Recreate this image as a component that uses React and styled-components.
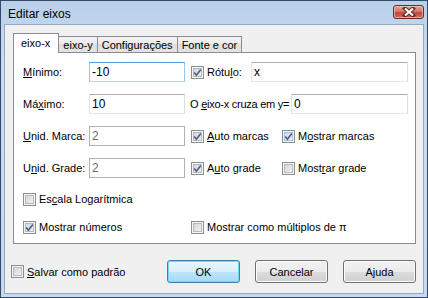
import styled, { createGlobalStyle } from "styled-components";

const GlobalStyle = createGlobalStyle`
  html, body { margin: 0; padding: 0; background: #fff; }
  body {
    font-family: "Liberation Sans", Arial, sans-serif;
    font-size: 11px;
    color: #000;
  }
`;

const Window = styled.div`
  width: 428px;
  height: 298px;
  box-sizing: border-box;
  border: 1px solid #34486a;
  background: linear-gradient(#b9d0ea, #cadcf1 60px, #c8daf0);
  padding: 0 3px 3px 3px;
  display: flex;
  flex-direction: column;
`;

const TitleBar = styled.div`
  height: 23px;
  flex: none;
  display: flex;
  justify-content: space-between;
  align-items: flex-start;
`;

const Title = styled.div`
  font-size: 12px;
  line-height: 16px;
  margin: 5px 0 0 4px;
`;

const CloseButton = styled.div`
  width: 31px;
  height: 14px;
  margin: 4px 0 0 0;
  box-sizing: border-box;
  border: 1px solid #6b2a23;
  border-radius: 3px;
  background: linear-gradient(#e3a597, #d17a6b 45%, #c1473a 55%, #cf6e5c);
  box-shadow: inset 0 0 0 1px rgba(255, 220, 210, 0.55);
  display: flex;
  align-items: center;
  justify-content: center;
`;

const Client = styled.div`
  flex: 1;
  border: 1px solid #93a8c4;
  background: #f0f0f0;
  padding: 8px 7px 0 8px;
  display: flex;
  flex-direction: column;
`;

const TabStrip = styled.div`
  display: flex;
  align-items: flex-end;
  height: 19px;
`;

const Tab = styled.div`
  position: relative;
  box-sizing: border-box;
  border: 1px solid #898c95;
  border-bottom: none;
  white-space: nowrap;
  display: flex;
  align-items: center;
  ${p => p.$active ? `
    height: 20px;
    margin-bottom: -1px;
    padding: 0 8px 2px 7px;
    background: #fff;
    z-index: 1;
  ` : `
    height: 16px;
    padding: 1px 4px 0 4px;
    border-left: none;
    background: linear-gradient(#f3f3f3, #ebebeb 50%, #dedede 50%, #e3e3e3);
  `}
`;

const Panel = styled.div`
  border: 1px solid #898c95;
  background: #fff;
  padding: 9px 0 6px 9px;
  display: flex;
  flex-direction: column;
`;

const FieldRow = styled.div`
  display: flex;
  align-items: center;
  height: 20px;
  margin-top: ${p => p.$gap || 0}px;
`;

const LeftCell = styled.div`
  width: 168px;
  flex: none;
  display: flex;
  align-items: center;
`;

const RightCell = styled.div`
  width: 217px;
  flex: none;
  display: flex;
  align-items: center;
`;

const Label = styled.span`
  width: 66px;
  flex: none;
  white-space: nowrap;
`;

const Prompt = styled.span`
  flex: 1;
  white-space: nowrap;
  letter-spacing: -0.25px;
  margin-left: -1px;
`;

const TextBox = styled.div`
  width: ${p => p.$w}px;
  height: 20px;
  box-sizing: border-box;
  flex: none;
  border: 1px solid;
  border-color: ${p => p.$focus
    ? "#569de5 #99c4ee #b7d5f2 #99c4ee"
    : p.$disabled
      ? "#adb2b5"
      : "#abadb3 #dbdfe6 #e3e9ef #e2e3ea"};
  background: #fff;
  color: ${p => (p.$disabled ? "#6d6d6d" : "#000")};
  font-size: 12px;
  line-height: 18px;
  padding-left: 2px;
  white-space: nowrap;
`;

const Check = styled.label`
  display: flex;
  align-items: center;
  white-space: nowrap;
  width: ${p => (p.$w ? `${p.$w}px` : "auto")};
  flex: none;
`;

const Box = styled.span`
  width: 13px;
  height: 13px;
  box-sizing: border-box;
  flex: none;
  margin-right: 3px;
  border: 1px solid ${p => (p.$hot ? "#7a8fa8" : "#8e8f8f")};
  background: ${p => p.$hot
    ? "linear-gradient(135deg, #c7d6e6, #f4f7fa)"
    : "linear-gradient(135deg, #ccd0d5, #f7f7f7)"};
  box-shadow: inset 0 0 0 1px #f4f4f4, inset 0 0 0 2px ${p => (p.$hot ? "#aebfd2" : "#b7bbc0")};
  display: flex;
  align-items: center;
  justify-content: center;
`;

const Key = styled.u`
  text-decoration-thickness: 1px;
  text-underline-offset: 1px;
`;

const Footer = styled.div`
  margin-top: 16px;
  margin-left: -2px;
  display: flex;
  align-items: center;
  gap: 15px;
`;

const Spacer = styled.div`
  flex: 1;
`;

const Button = styled.button`
  width: 73px;
  height: 23px;
  box-sizing: border-box;
  padding: 0;
  font: 11px "Liberation Sans", Arial, sans-serif;
  color: #000;
  border: 1px solid ${p => (p.$default ? "#3c7fb1" : "#707070")};
  border-radius: 3px;
  background: ${p => p.$default
    ? "linear-gradient(#eaf6fd, #d9f0fc 50%, #bee6fd 50%, #a7d9f5)"
    : "linear-gradient(#f2f2f2, #ebebeb 50%, #dddddd 50%, #cfcfcf)"};
  box-shadow: inset 0 0 0 1px ${p => (p.$default ? "#72d8fb" : "#fcfcfc")};
`;

const CheckBox = ({ checked, hot, w, children }) => (
  <Check $w={w}>
    <Box $hot={hot}>
      {checked && (
        <svg width="9" height="9" viewBox="0 0 9 9">
          <path d="M1.2 4.6 L3.4 7.2 L7.8 1.4" fill="none" stroke="#4a5d8a" strokeWidth="1.6" />
        </svg>
      )}
    </Box>
    <span>{children}</span>
  </Check>
);

export default function App() {
  return (
    <>
      <GlobalStyle />
      <Window>
        <TitleBar>
          <Title>Editar eixos</Title>
          <CloseButton>
            <svg width="14" height="10" viewBox="0 0 14 10">
              <path d="M3 1.5 L11 8.5 M11 1.5 L3 8.5" stroke="#5a2a26" strokeWidth="4" strokeLinecap="square" />
              <path d="M3 1.5 L11 8.5 M11 1.5 L3 8.5" stroke="#fff" strokeWidth="2.2" />
            </svg>
          </CloseButton>
        </TitleBar>
        <Client>
          <TabStrip>
            <Tab $active>eixo-x</Tab>
            <Tab>eixo-y</Tab>
            <Tab>Configurações</Tab>
            <Tab>Fonte e cor</Tab>
          </TabStrip>
          <Panel>
            <FieldRow>
              <LeftCell>
                <Label><Key>M</Key>ínimo:</Label>
                <TextBox $w={96} $focus>-10</TextBox>
              </LeftCell>
              <RightCell>
                <CheckBox w={60} checked>Rótu<Key>l</Key>o:</CheckBox>
                <TextBox $w={157}>x</TextBox>
              </RightCell>
            </FieldRow>
            <FieldRow $gap={12}>
              <LeftCell>
                <Label>Má<Key>x</Key>imo:</Label>
                <TextBox $w={96}>10</TextBox>
              </LeftCell>
              <RightCell>
                <Prompt>O <Key>e</Key>ixo-x cruza em y=</Prompt>
                <TextBox $w={117}>0</TextBox>
              </RightCell>
            </FieldRow>
            <FieldRow $gap={12}>
              <LeftCell>
                <Label><Key>U</Key>nid. Marca:</Label>
                <TextBox $w={96} $disabled>2</TextBox>
              </LeftCell>
              <RightCell>
                <CheckBox w={91} checked><Key>A</Key>uto marcas</CheckBox>
                <CheckBox checked hot>M<Key>o</Key>strar marcas</CheckBox>
              </RightCell>
            </FieldRow>
            <FieldRow $gap={12}>
              <LeftCell>
                <Label>U<Key>n</Key>id. Grade:</Label>
                <TextBox $w={96} $disabled>2</TextBox>
              </LeftCell>
              <RightCell>
                <CheckBox w={91} checked>A<Key>u</Key>to grade</CheckBox>
                <CheckBox>Most<Key>r</Key>ar grade</CheckBox>
              </RightCell>
            </FieldRow>
            <FieldRow $gap={11}>
              <CheckBox>Es<Key>c</Key>ala Logarítmica</CheckBox>
            </FieldRow>
            <FieldRow $gap={8}>
              <LeftCell>
                <CheckBox checked>Mostrar números</CheckBox>
              </LeftCell>
              <CheckBox>Mostrar como múltiplos de π</CheckBox>
            </FieldRow>
          </Panel>
          <Footer>
            <CheckBox><Key>S</Key>alvar como padrão</CheckBox>
            <Spacer />
            <Button $default>OK</Button>
            <Button>Cancelar</Button>
            <Button>Ajuda</Button>
          </Footer>
        </Client>
      </Window>
    </>
  );
}
